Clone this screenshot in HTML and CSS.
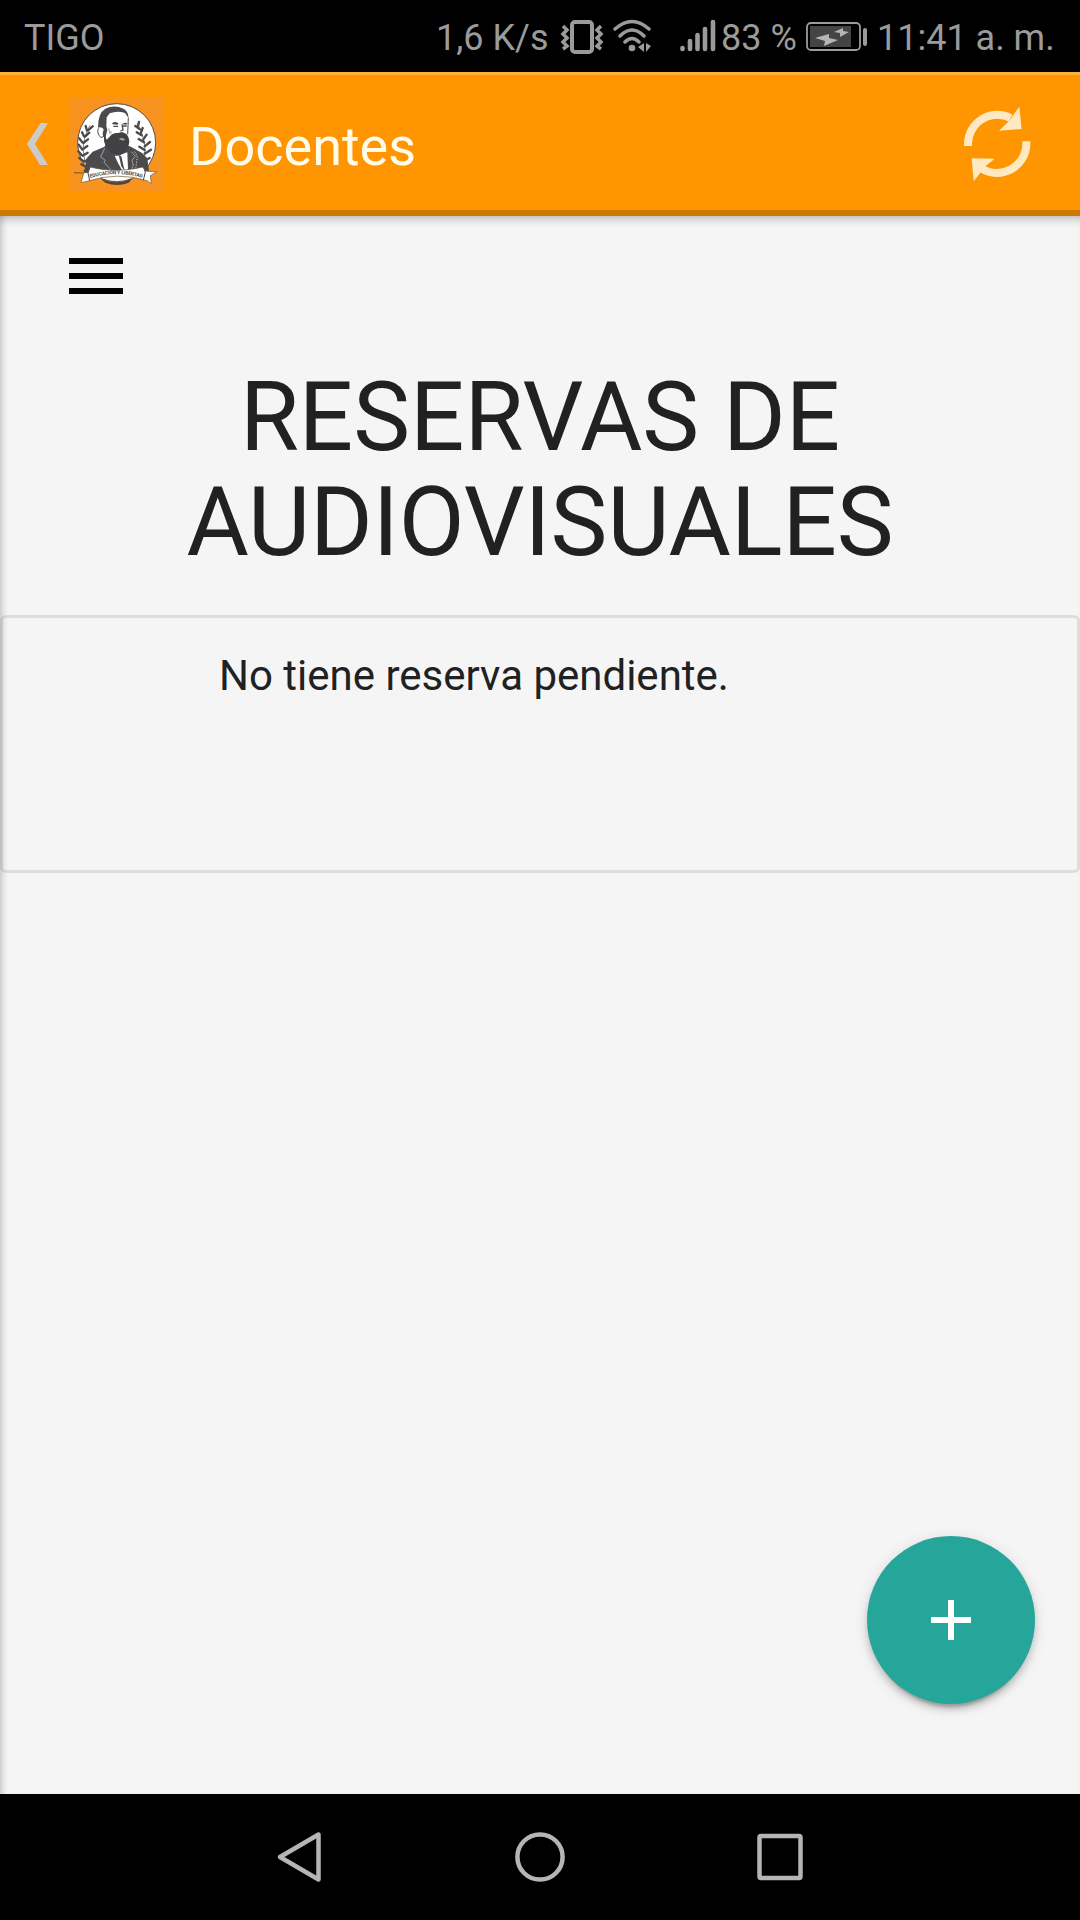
FILE: index.html
```html
<!DOCTYPE html>
<html lang="es">
<head>
    <meta charset="UTF-8">
    <meta name="viewport" content="width=device-width, initial-scale=1.0">
    <title>Docentes</title>
    <link rel="stylesheet" href="styles.css">
</head>
<body>

    <div class="status-bar">
        <span class="carrier">TIGO</span>
        <span class="speed">1,6 K/s</span>
        <svg class="vibrate" width="44" height="36" viewBox="0 0 44 36" fill="none" stroke="#9b9b9b">
            <rect x="12" y="3" width="20" height="30" rx="3" stroke-width="4"/>
            <path d="M3 7l4 4-4 4 4 4-4 4 4 4-4 3M41 7l-4 4 4 4-4 4 4 4-4 4 4 3" stroke-width="3.5"/>
        </svg>
        <svg class="wifi" width="42" height="36" viewBox="0 0 42 36" fill="none" stroke="#9b9b9b" stroke-width="3.5" stroke-linecap="round">
            <path d="M3 10Q20-5 37 10M8 17Q20 5 32 17M13 23Q20 16 27 23"/>
            <circle cx="20" cy="29" r="3.3" fill="#9b9b9b" stroke="none"/>
            <path d="M32 24v9l-6-5zM34 24v9l5-6z" fill="#9b9b9b" stroke="none"/>
        </svg>
        <svg class="signal" width="36" height="36" viewBox="0 0 36 36" stroke="#9b9b9b" stroke-width="4.6" stroke-linecap="round">
            <path d="M2.500 29v1M10 22v8M17.500 16v14M25 10v20M33 3v27"/>
        </svg>
        <span class="percent">83 %</span>
        <svg class="battery" width="62" height="32" viewBox="0 0 62 32">
            <rect x="1" y="2" width="53" height="27" rx="4" fill="none" stroke="#9b9b9b" stroke-width="1.8"/>
            <rect x="4" y="5" width="41" height="21" fill="#444"/>
            <path d="M9 17l14-4 0 4 9 2-14 6 1-5zM28 11l9-4 0 3 6 1-9 5 0-4z" fill="#b5b5b5"/>
            <rect x="57" y="7" width="4" height="18" rx="2" fill="#9b9b9b"/>
        </svg>
        <span class="clock">11:41 a. m.</span>
    </div>

    <header class="action-bar">
        <svg class="back" width="21" height="42" viewBox="82 369 63 126">
            <path d="M145 369h-22L82 432l39 63h24l-39-63z" fill="#ccc"/>
        </svg>
        <svg class="logo" width="94" height="94" viewBox="30 18 282 282">
            <rect x="30" y="18" width="282" height="282" fill="#f7931e"/>
            <circle cx="170" cy="155" r="117" fill="#fff" stroke="#55504d" stroke-width="3"/>
            <!-- traje -->
            <path d="M72 250l8-48 18-20 34-14 14-16 64 14 36 20 16 16 6 48z" fill="#4b4a4d"/>
            <path d="M164 194l12 0 14-6 12-4 2 50-12 14-18-32z" fill="#fff"/>
            <path d="M176 192l8 4 10 44-10-14z" fill="#4b4a4d"/>
            <path d="M134 172l-12 26 14 10-4 6 30 32M214 182l12 14-10 12 4 14-10 24" fill="none" stroke="#c9c9c9" stroke-width="2"/>
            <path d="M224 182l8 14-6 46" fill="none" stroke="#fff" stroke-width="2" stroke-dasharray="4 4"/>
            <!-- cara -->
            <path d="M112 118q0-12 8-10l4-34 14-18 42-5 20 12 4 18 2 40-6 20-52 18-24-14-4-16q-8 0-8-11z" fill="#fff"/>
            <path d="M114 110q0-44 22-57 28-13 54 0 16 8 15 27l-10-14q-22-8-46 1l-9 12-1 26 3 12-6 24q-8 0-8-14l3-12q-6-9-17-5z" fill="#4b4a4d"/>
            <path d="M115 112q-6 14 8 28l8-4" fill="none" stroke="#4b4a4d" stroke-width="3"/>
            <path d="M132 126l8 20 8-8q10-14 26-12l12-3 12 5q9 8 10 24-2 24-20 34-20 10-36-2-14-10-20-34z" fill="#414043"/>
            <path d="M156 97q11-8 20 1l-4 3-14-1zM187 98q8-5 15-2l-3 5-11-1z" fill="#4b4a4d"/>
            <path d="M160 106h14M189 105h11M186 100l3 17-8 3" fill="none" stroke="#4b4a4d" stroke-width="4"/>
            <path d="M205 80l-2 50" stroke="#4b4a4d" stroke-width="3"/>
            <path d="M176 145l8-5 12 5-6 4z" fill="#a5a3a3"/>
            <path d="M146 112l4 18M152 120l2 8" stroke="#a5a3a3" stroke-width="3"/>
            <!-- ramas -->
            <g fill="none" stroke="#4b4a4d" stroke-width="7" stroke-linecap="round">
                <path d="M89 104Q48 174 90 246" stroke-width="2"/>
                <path d="M81 119l-4-14M84 118l14-12M72 136l-6-12M75 137l13-12M67 154l-9-12M70 156l14-11M65 173l-9-12M67 176l15-11M65 192l-10-11M68 194l15-9M69 210l-11-9M72 212l15-7M77 227l-13-7M80 229l15-5M88 243l-14-4"/>
                <path d="M232 98Q276 176 236 246" stroke-width="2"/>
                <path d="M234 106l3-13M239 114l-13-9M243 125l5-14M245 133l-15-9M250 145l10-14M252 154l-16-10M254 166l16-13M254 177l-16-10M254 188l19-12M252 200l-14-10M250 211l19-10M246 222l-12-10M242 233l19-6M236 245l17-2"/>
            </g>
            <!-- cinta -->
            <path d="M120 262q50 24 98 0l-12 13q-34 14-70 0z" fill="#554339"/>
            <path d="M42 245l29 2-8 28 18-4q90-30 180-2l13 9-3-24 19-11-34-3-6-12q-85 20-160 0l-6 17z" fill="#fff" stroke="#6d542e" stroke-width="2"/>
            <path d="M90 228l-6 17 5 24M250 228l6 15-6 25" fill="none" stroke="#4b4a4d" stroke-width="3"/>
            <path id="lema" d="M91 261Q170 237 252 262" fill="none"/>
            <text class="motto"><textPath href="#lema" textLength="158">EDUCACIÓN Y LIBERTAD</textPath></text>
        </svg>
        <h2 class="title">Docentes</h2>
        <svg class="refresh" width="75" height="80" viewBox="60 45 225 240">
            <g fill="none" stroke="#ffe9c2" stroke-width="24">
                <path d="M84 168v-6A88 88 0 0 1 212 84"/>
                <path d="M259 154v8A88 88 0 0 1 125 236"/>
            </g>
            <path d="M238 50l7 67-68 5 31-30zM95 205l69 1-27 22-36 46z" fill="#ffe9c2"/>
        </svg>
    </header>

    <main class="page">
        <div class="menu">
            <span></span>
            <span></span>
            <span></span>
        </div>
        <h1>RESERVAS DE AUDIOVISUALES</h1>
        <div class="collection">
            <p>No tiene reserva pendiente.</p>
        </div>
        <a class="btn-floating">
            <svg width="40" height="40" viewBox="0 0 40 40">
                <path d="M20 0v40M0 20h40" stroke="#fff" stroke-width="6"/>
            </svg>
        </a>
    </main>

    <nav class="nav-bar">
        <svg width="50" height="54" viewBox="0 0 50 54">
            <path d="M43.500 4.500v45L5 27z"/>
        </svg>
        <svg width="50" height="54" viewBox="0 0 50 54">
            <circle cx="25" cy="27" r="22.600"/>
        </svg>
        <svg width="50" height="54" viewBox="0 0 50 54">
            <rect x="4.500" y="6" width="41" height="42" rx="1.500"/>
        </svg>
    </nav>

</body>
</html>
```

FILE: styles.css
```css
* {
    box-sizing: border-box;
}
body {
    margin: 0;
    width: 1080px;
    height: 1920px;
    display: flex;
    flex-direction: column;
    font-family: Roboto, sans-serif;
    background-color: #000;
    overflow: hidden;
}
/* Barra de estado */
.status-bar {
    height: 72px;
    display: flex;
    align-items: center;
    padding: 4px 0 0 24px;
    color: #9b9b9b;
    font-size: 36px;
    white-space: nowrap;
}
.status-bar svg {
    margin-bottom: 2px;
}
.carrier {
    width: 412px;
}
.speed {
    width: 124px;
}
.vibrate {
    margin-right: 8px;
}
.wifi {
    margin-right: 26px;
}
.signal {
    margin-right: 5px;
}
.percent {
    width: 85px;
}
.battery {
    margin-right: 9px;
}
/* Cabecera */
.action-bar {
    height: 144px;
    display: flex;
    align-items: center;
    padding: 2px 45px 0 27px;
    background-color: #ff9500;
    border-top: 3px solid #ffb03b;
    border-bottom: 6px solid #cc7700;
}
.logo {
    margin: 0 25px 0 22px;
}
.motto {
    font-size: 15px;
    font-weight: bold;
    fill: #4b4a4d;
}
.title {
    flex: 1;
    margin: 5px 0 0;
    font-size: 54px;
    font-weight: 400;
    color: #fffbe8;
}
.refresh {
    margin-top: 2px;
}
/* Contenido */
.page {
    position: relative;
    height: 1578px;
    padding-top: 42px;
    background-color: #f5f5f5;
    box-shadow: inset 0 9px 9px -6px rgba(0, 0, 0, 0.24), inset 7px 0 7px -5px rgba(0, 0, 0, 0.2);
}
.menu {
    width: 54px;
    margin-left: 69px;
    display: flex;
    flex-direction: column;
    gap: 9px;
}
.menu span {
    height: 6px;
    background-color: #000;
}
h1 {
    width: 800px;
    margin: 71px auto 40px;
    font-size: 95.7px;
    font-weight: 400;
    line-height: 105px;
    text-align: center;
    color: #212121;
}
.collection {
    height: 258px;
    padding: 26px 0 0 216px;
    border: 3px solid rgba(0, 0, 0, 0.09);
    border-radius: 6px;
}
.collection p {
    margin: 0;
    font-size: 42px;
    line-height: 63px;
    color: #212121;
}
.btn-floating {
    position: absolute;
    right: 45px;
    bottom: 90px;
    width: 168px;
    height: 168px;
    padding-bottom: 1px;
    display: flex;
    align-items: center;
    justify-content: center;
    background-color: #26a69a;
    border-radius: 50%;
    box-shadow: 0 6px 6px 0 rgba(0, 0, 0, 0.14), 0 3px 15px 0 rgba(0, 0, 0, 0.12), 0 9px 3px -6px rgba(0, 0, 0, 0.2);
}
/* Botones de navegación */
.nav-bar {
    height: 126px;
    display: flex;
    align-items: center;
    justify-content: center;
    gap: 190px;
}
.nav-bar svg {
    fill: none;
    stroke: #b5b5b5;
    stroke-width: 4.5;
    stroke-linejoin: round;
}
```
